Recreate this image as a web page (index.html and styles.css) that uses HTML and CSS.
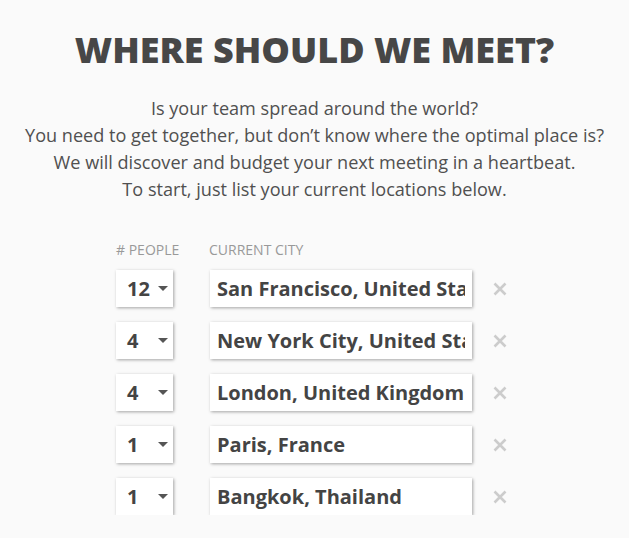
FILE: index.html
```html
<!DOCTYPE html>
<html>
<head>
<meta charset="utf-8">
<link rel="stylesheet" href="styles.css">
</head>
<body>
<main class="page">
  <h1 class="title">WHERE SHOULD WE MEET?</h1>
  <p class="intro">Is your team spread around the world?<br>You need to get together, but don’t know where the optimal place is?<br>We will discover and budget your next meeting in a heartbeat.<br>To start, just list your current locations below.</p>
  <div class="form">
    <div class="labels">
      <span class="label label-people"># PEOPLE</span>
      <span class="label">CURRENT CITY</span>
    </div>
    <div class="row">
      <div class="count"><span class="num">12</span><span class="caret"></span></div>
      <input class="city" type="text" value="San Francisco, United States">
      <svg class="remove" width="14" height="14" viewBox="0 0 14 14"><path d="M1.5 1.5 L12.5 12.5 M12.5 1.5 L1.5 12.5" stroke="#cccccc" stroke-width="2.6" stroke-linecap="butt"/></svg>
    </div>
    <div class="row">
      <div class="count"><span class="num">4</span><span class="caret"></span></div>
      <input class="city" type="text" value="New York City, United States">
      <svg class="remove" width="14" height="14" viewBox="0 0 14 14"><path d="M1.5 1.5 L12.5 12.5 M12.5 1.5 L1.5 12.5" stroke="#cccccc" stroke-width="2.6" stroke-linecap="butt"/></svg>
    </div>
    <div class="row">
      <div class="count"><span class="num">4</span><span class="caret"></span></div>
      <input class="city" type="text" value="London, United Kingdom">
      <svg class="remove" width="14" height="14" viewBox="0 0 14 14"><path d="M1.5 1.5 L12.5 12.5 M12.5 1.5 L1.5 12.5" stroke="#cccccc" stroke-width="2.6" stroke-linecap="butt"/></svg>
    </div>
    <div class="row">
      <div class="count"><span class="num">1</span><span class="caret"></span></div>
      <input class="city" type="text" value="Paris, France">
      <svg class="remove" width="14" height="14" viewBox="0 0 14 14"><path d="M1.5 1.5 L12.5 12.5 M12.5 1.5 L1.5 12.5" stroke="#cccccc" stroke-width="2.6" stroke-linecap="butt"/></svg>
    </div>
    <div class="row">
      <div class="count"><span class="num">1</span><span class="caret"></span></div>
      <input class="city" type="text" value="Bangkok, Thailand">
      <svg class="remove" width="14" height="14" viewBox="0 0 14 14"><path d="M1.5 1.5 L12.5 12.5 M12.5 1.5 L1.5 12.5" stroke="#cccccc" stroke-width="2.6" stroke-linecap="butt"/></svg>
    </div>
  </div>
</main>
</body>
</html>
```
FILE: styles.css
```css
html, body {
  margin: 0;
  padding: 0;
  background: #fafafa;
}
body {
  font-family: "Open Sans", "Liberation Sans", sans-serif;
  color: #4a4a4a;
}
.page {
  width: 629px;
  padding-top: 28px;
}
.title {
  margin: 0;
  text-align: center;
  font-size: 36px;
  font-weight: 800;
  line-height: 43px;
  color: #474747;
}
.intro {
  margin: 24px 0 0;
  text-align: center;
  font-size: 18.1px;
  line-height: 27px;
  color: #505050;
}
.form {
  margin: 38px 0 0 116px;
}
.labels {
  display: flex;
  font-size: 14px;
  line-height: 18px;
  color: #999999;
}
.label-people {
  width: 93px;
}
.row {
  display: flex;
  align-items: center;
  margin-top: 15px;
}
.labels + .row {
  margin-top: 11px;
}
.count {
  box-sizing: border-box;
  width: 57px;
  height: 37px;
  background: #ffffff;
  box-shadow: 1px 1px 3px rgba(0, 0, 0, 0.35);
  display: flex;
  align-items: center;
  padding-left: 11px;
  position: relative;
}
.num {
  font-size: 20px;
  font-weight: 700;
  color: #444444;
  line-height: 37px;
}
.caret {
  position: absolute;
  left: 42px;
  top: 16px;
  width: 0;
  height: 0;
  border-left: 5px solid transparent;
  border-right: 5px solid transparent;
  border-top: 5px solid #555555;
}
.city {
  box-sizing: border-box;
  width: 262px;
  height: 37px;
  margin: 0 0 0 37px;
  padding: 0 7px;
  border: none;
  outline: none;
  background: #ffffff;
  box-shadow: 1px 1px 3px rgba(0, 0, 0, 0.35);
  font-family: "Open Sans", "Liberation Sans", sans-serif;
  font-size: 20px;
  font-weight: 700;
  color: #444444;
}
.remove {
  margin-left: 21px;
  flex: none;
}
```
